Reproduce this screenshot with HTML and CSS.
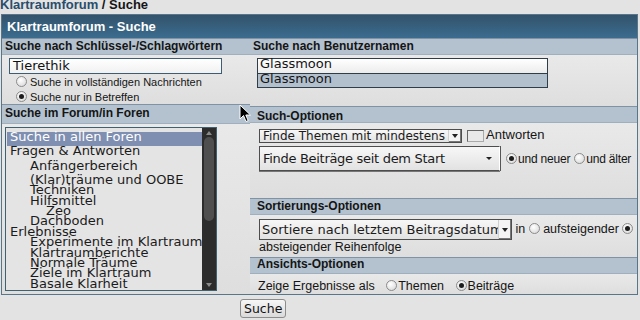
FILE: index.html
```html
<!DOCTYPE html>
<html lang="de">
<head>
    <meta charset="UTF-8">
    <title>Klartraumforum - Suche</title>
    <link rel="stylesheet" href="styles.css">
</head>
<body>
    <div class="crumbs"><a href="#">Klartraumforum</a> / Suche</div>

    <form class="search">
        <div class="title">Klartraumforum - Suche</div>
        <div class="cols">
            <div class="col">
                <div class="band">Suche nach Schlüssel-/Schlagwörtern</div>
                <div class="cell keywords">
                    <div class="field">Tierethik</div>
                    <div class="opt"><span class="radio"></span>Suche in vollständigen Nachrichten</div>
                    <div class="opt"><span class="radio on"></span>Suche nur in Betreffen</div>
                </div>
                <div class="band band-forum">Suche im Forum/in Foren</div>
                <div class="cell forums">
                    <div class="listbox">
                        <div class="items">
                            <div class="item big sel">Suche in allen Foren</div>
                            <div class="item big">Fragen &amp; Antworten</div>
                            <div class="item big lv2">Anfängerbereich</div>
                            <div class="item lv2">(Klar)träume und OOBE</div>
                            <div class="item lv2">Techniken</div>
                            <div class="item lv2">Hilfsmittel</div>
                            <div class="item lv3">Zeo</div>
                            <div class="item lv2">Dachboden</div>
                            <div class="item">Erlebnisse</div>
                            <div class="item lv2">Experimente im Klartraum</div>
                            <div class="item lv2">Klartraumberichte</div>
                            <div class="item lv2">Normale Träume</div>
                            <div class="item lv2">Ziele im Klartraum</div>
                            <div class="item lv2">Basale Klarheit</div>
                        </div>
                        <div class="scrollbar">
                            <span class="up"></span>
                            <span class="thumb"></span>
                            <span class="down"></span>
                        </div>
                    </div>
                </div>
            </div>

            <div class="col right">
                <div class="band">Suche nach Benutzernamen</div>
                <div class="cell users">
                    <div class="userlist">
                        <div class="user">Glassmoon</div>
                        <div class="user sel">Glassmoon</div>
                    </div>
                </div>

                <div class="band sub band-such">Such-Optionen</div>
                <div class="cell options">
                    <div class="line top">
                        <span class="select small">Finde Themen mit mindestens<span class="arrow"></span></span>
                        <span class="check"></span>
                        <span class="lbl">Antworten</span>
                    </div>
                    <div class="line">
                        <span class="select big">Finde Beiträge seit dem Start<span class="tri"></span></span>
                        <span class="radio on"></span><span class="lbl">und neuer</span>
                        <span class="radio"></span><span class="lbl">und älter</span>
                    </div>
                </div>

                <div class="band sub">Sortierungs-Optionen</div>
                <div class="cell sort">
                    <span class="select medium">Sortiere nach letztem Beitragsdatum<span class="arrow"></span></span>
                    in <span class="radio"></span> aufsteigender <span class="radio on"></span>
                    absteigender Reihenfolge
                </div>

                <div class="band sub band-view">Ansichts-Optionen</div>
                <div class="cell view">
                    Zeige Ergebnisse als
                    <span class="radio"></span>Themen
                    <span class="radio on"></span>Beiträge
                </div>
            </div>
        </div>
    </form>

    <div class="submit"><button type="button">Suche</button></div>

    <svg class="cursor" width="13" height="19" viewBox="0 0 13 19">
        <path d="M1 1 L1 15 L4.5 11.5 L7 17.5 L9.2 16.6 L6.8 11 L11.5 11 Z" fill="#000" stroke="#fff" stroke-width="1"/>
    </svg>
</body>
</html>
```

FILE: styles.css
```css
body {
    margin: 0;
    background: #e3e3e3;
    font-family: "Liberation Sans", Arial, sans-serif;
    color: #151515;
    position: relative;
    overflow: hidden;
}

.crumbs {
    height: 14px;
    line-height: 9px;
    font-size: 13px;
    font-weight: bold;
}

.crumbs a {
    color: #2a4d6c;
    text-decoration: none;
}

.search {
    margin: 0 2px 0 1px;
    border: 1px solid #587589;
}

.title {
    height: 22px;
    padding: 1px 0 0 5px;
    line-height: 22px;
    font-size: 13px;
    font-weight: bold;
    color: #fff;
    background: linear-gradient(#33536b, #3b6c8f);
}

.cols {
    display: grid;
    grid-template-columns: 248px 1fr;
}

.col {
    display: flex;
    flex-direction: column;
}

/* section headers */
.band {
    height: 15px;
    line-height: 15px;
    padding-left: 3px;
    font-size: 12px;
    font-weight: bold;
    background: #b4c2cf;
    border-top: 1px solid #7f93a5;
    border-bottom: 1px solid #9fafbe;
    white-space: nowrap;
}

.band.sub { padding-left: 7px; }
.band-forum { height: 18px; line-height: 17px; }
.band-such { line-height: 19px; }
.band-view { line-height: 13px; }

.cell {
    background: linear-gradient(#e9e9e9, #dedede);
}

/* keywords */
.keywords {
    height: 46px;
    padding: 3px 0 0 7px;
}

.field {
    box-sizing: border-box;
    width: 213px;
    height: 16px;
    padding-left: 3px;
    border: 1px solid #3e5d72;
    background: linear-gradient(#fff, #f1f1f1);
    font: 13px/13px "DejaVu Sans", sans-serif;
    color: #111;
}

.opt {
    display: flex;
    align-items: center;
    gap: 3px;
    height: 15px;
    padding-left: 7px;
    font-size: 11px;
}

.opt:first-of-type { margin-top: 2px; }

.radio {
    display: inline-block;
    box-sizing: border-box;
    width: 11px;
    height: 11px;
    border: 1px solid #8b8b8b;
    border-radius: 50%;
    background: radial-gradient(circle at 40% 35%, #fff, #d4d4d4);
    position: relative;
    vertical-align: -1px;
    flex: none;
}

.radio.on::after {
    content: '';
    position: absolute;
    left: 2px;
    top: 2px;
    width: 5px;
    height: 5px;
    border-radius: 50%;
    background: #1c1c1c;
}

/* forum list */
.forums {
    height: 167px;
    padding: 3px 0 0 3px;
}

.listbox {
    display: flex;
    width: 210px;
    height: 162px;
    border: 1px solid #3f6272;
    background: #e4e4e4;
    overflow: hidden;
}

.items {
    flex: 1;
    padding: 4px 0 0 1px;
    font: 13px "DejaVu Sans", sans-serif;
    color: #1b1b1b;
    white-space: nowrap;
    overflow: hidden;
}

.item {
    height: 10.4px;
    line-height: 10px;
    padding-left: 3px;
}

.item.big { height: 14.3px; }
.item.lv2 { padding-left: 23px; }
.item.lv3 { padding-left: 39px; }

.item.sel {
    background: #7f8fb2;
    color: #fff;
}

.scrollbar {
    width: 14px;
    display: flex;
    flex-direction: column;
    align-items: center;
    background: #2c2c2c;
}

.scrollbar .thumb {
    width: 10px;
    height: 84px;
    margin-top: 2px;
    border-radius: 5px;
    background: #4f4f4f;
}

.scrollbar .up,
.scrollbar .down {
    width: 0;
    height: 0;
    border-left: 3px solid transparent;
    border-right: 3px solid transparent;
}

.scrollbar .up {
    margin-top: 3px;
    border-bottom: 4px solid #8a8a8a;
}

.scrollbar .down {
    margin-top: auto;
    margin-bottom: 3px;
    border-top: 4px solid #8a8a8a;
}

/* user names */
.users {
    height: 48px;
    padding: 3px 0 0 7px;
}

.userlist {
    width: 289px;
    border: 1px solid #2f3d48;
    font: 13px "DejaVu Sans", sans-serif;
}

.user {
    height: 14px;
    line-height: 10px;
    padding-left: 2px;
    background: linear-gradient(#fff, #ececec);
}

.user.sel {
    height: 13px;
    border-top: 1px solid #2f3d48;
    background: #b2c0ce;
}

/* options */
.right .cell { font-size: 12.5px; }

.options {
    height: 69px;
    padding: 6px 0 0 9px;
}

.line {
    display: flex;
    align-items: center;
    white-space: nowrap;
}

.line.top {
    align-items: flex-start;
    height: 17px;
}

.select {
    display: inline-flex;
    align-items: center;
    box-sizing: border-box;
    position: relative;
    flex: none;
    font-family: "DejaVu Sans", sans-serif;
    color: #1b1b1b;
    white-space: nowrap;
    border: 1px solid #4d4d4d;
    background: linear-gradient(#f7f7f7, #e2e2e2);
}

.select.small {
    width: 203px;
    height: 14px;
    padding-left: 3px;
    font-size: 12px;
}

.select.big {
    width: 241px;
    height: 25px;
    padding-left: 3px;
    font-size: 13px;
    letter-spacing: -0.3px;
    border-right-color: #fff;
    box-shadow: 1px 0 0 #555, 0 1px 0 #777;
}

.select.medium {
    width: 253px;
    height: 21px;
    padding-left: 2px;
    font-size: 13px;
    vertical-align: middle;
}

.select .arrow {
    position: absolute;
    right: 0;
    top: 0;
    bottom: 0;
    width: 12px;
    background: #f4f4f4;
    border-left: 1px solid #cfcfcf;
    box-shadow: inset -1px -1px 0 #777;
}

.select .arrow::after,
.select .tri::after {
    content: '';
    position: absolute;
    left: 3px;
    top: 50%;
    margin-top: -2px;
    border-left: 3px solid transparent;
    border-right: 3px solid transparent;
    border-top: 4px solid #222;
}

.select .tri {
    position: absolute;
    right: 10px;
    top: 0;
    bottom: 0;
    width: 0;
}

.select .tri::after {
    left: -3px;
    border-top-width: 3px;
}

.check {
    display: inline-block;
    box-sizing: border-box;
    width: 17px;
    height: 12px;
    margin: 1px 2px 0 5px;
    border: 1px solid #666;
    border-right-color: #aaa;
    border-bottom-color: #aaa;
    background: #e9e9e9;
}

.lbl {
    font-size: 13px;
    line-height: 12px;
}

.line .radio { margin: 0 1px 0 6px; }
.line .radio + .lbl {
    font-size: 12px;
    letter-spacing: -0.2px;
}
.line .radio ~ .radio { margin-left: 4px; }

.sort {
    height: 38px;
    padding: 4px 0 0 9px;
    line-height: 15px;
}

.view {
    height: 16px;
    padding: 4px 0 0 8px;
    line-height: 16px;
}

.view .radio { margin: 0 1px 0 8px; }

.submit {
    padding: 4px 0 0 240px;
}

.submit button {
    height: 19px;
    padding: 0 3px;
    font: 12.5px "DejaVu Sans", sans-serif;
    color: #111;
    border: 1px solid #8c8c8c;
    border-radius: 3px;
    background: linear-gradient(#f6f6f6, #dadada);
}

.cursor {
    position: absolute;
    left: 239px;
    top: 104px;
}
```
